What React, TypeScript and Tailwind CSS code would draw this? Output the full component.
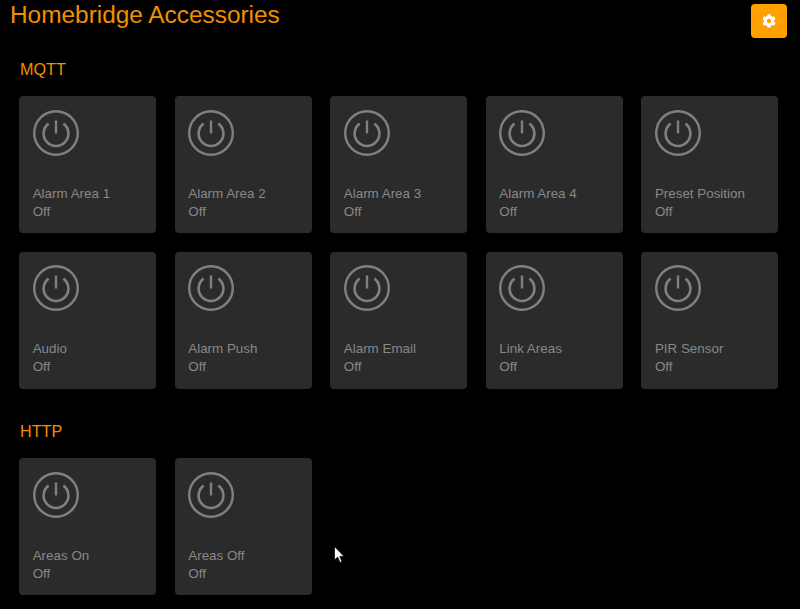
const mqtt = ["Alarm Area 1", "Alarm Area 2", "Alarm Area 3", "Alarm Area 4", "Preset Position", "Audio", "Alarm Push", "Alarm Email", "Link Areas", "PIR Sensor"];
const http = ["Areas On", "Areas Off"];

function Tile({ name }: { name: string }) {
  return (
    <div className="w-[137px] h-[137px] rounded-[4px] bg-[#2b2b2b] pl-[13.7px] pt-[13.7px] flex flex-col">
      <svg width="46" height="46" viewBox="0 0 46 46" fill="none" stroke="#808080" className="block">
        <circle cx="23" cy="23" r="21.8" strokeWidth="2.4" />
        <path d="M15.6 13.6 A12.4 12.4 0 1 0 30.4 13.6" strokeWidth="2.6" strokeLinecap="butt" />
        <path d="M23 10.5 V23.5" strokeWidth="2.4" />
      </svg>
      <div className="mt-[29.3px] text-[13.4px] leading-[18px] text-[#888888]">
        <div>{name}</div>
        <div>Off</div>
      </div>
    </div>
  );
}

function Section({ title, items, top }: { title: string; items: string[]; top: string }) {
  return (
    <section className={top}>
      <h2 className="pl-[20px] text-[16.2px] leading-[20px] text-[#f09000]">{title}</h2>
      <div className="mt-[17px] ml-[19px] flex flex-wrap gap-x-[18.55px] gap-y-[18.5px] w-[770px]">
        {items.map((n) => (
          <Tile key={n} name={n} />
        ))}
      </div>
    </section>
  );
}

export default function App() {
  return (
    <div className="relative w-[800px] h-[609px] overflow-hidden bg-black font-['Liberation_Sans',sans-serif]">
      <header className="flex items-start justify-between pl-[10px] pr-[13px] pt-[4px] h-[59px]">
        <h1 className="text-[24.4px] leading-[22px] text-[#f09000]">Homebridge Accessories</h1>
        <button className="w-[36px] h-[34px] rounded-[4px] bg-[#ff9f00] flex items-center justify-center">
          <svg width="14" height="14" viewBox="0 0 512 512" fill="#fff">
            <path d="M487.4 315.7l-42.6-24.6c4.3-23.2 4.3-47 0-70.2l42.6-24.6c4.9-2.8 7.1-8.6 5.5-14-11.1-35.6-30-67.8-54.7-94.6-3.8-4.1-10-5.1-14.8-2.3L380.8 110c-17.9-15.4-38.5-27.3-60.8-35.1V25.8c0-5.6-3.9-10.5-9.4-11.7-36.7-8.2-74.3-7.8-109.2 0-5.5 1.2-9.4 6.1-9.4 11.7V75c-22.2 7.9-42.8 19.8-60.8 35.1L88.7 85.5c-4.9-2.8-11-1.9-14.8 2.3-24.7 26.7-43.6 58.9-54.7 94.6-1.7 5.4.6 11.2 5.5 14L67.3 221c-4.3 23.2-4.3 47 0 70.2l-42.6 24.6c-4.9 2.8-7.1 8.6-5.5 14 11.1 35.6 30 67.8 54.7 94.6 3.8 4.1 10 5.1 14.8 2.3l42.6-24.6c17.9 15.4 38.5 27.3 60.8 35.1v49.2c0 5.6 3.9 10.5 9.4 11.7 36.7 8.2 74.3 7.8 109.2 0 5.5-1.2 9.4-6.1 9.4-11.7v-49.2c22.2-7.9 42.8-19.8 60.8-35.1l42.6 24.6c4.9 2.8 11 1.9 14.8-2.3 24.7-26.7 43.6-58.9 54.7-94.6 1.5-5.5-.7-11.3-5.6-14.1zM256 336c-44.1 0-80-35.9-80-80s35.9-80 80-80 80 35.9 80 80-35.9 80-80 80z" />
          </svg>
        </button>
      </header>
      <Section title="MQTT" items={mqtt} top="" />
      <Section title="HTTP" items={http} top="mt-[32.5px]" />
      <svg width="12" height="18" viewBox="0 0 12 18" className="absolute left-[334px] top-[546px]">
        <path d="M0.5 0.5 V14 L3.7 11 L6 16.5 L8 15.6 L5.8 10.4 H10 Z" fill="#fff" stroke="#000" strokeWidth="0.7" />
      </svg>
    </div>
  );
}
